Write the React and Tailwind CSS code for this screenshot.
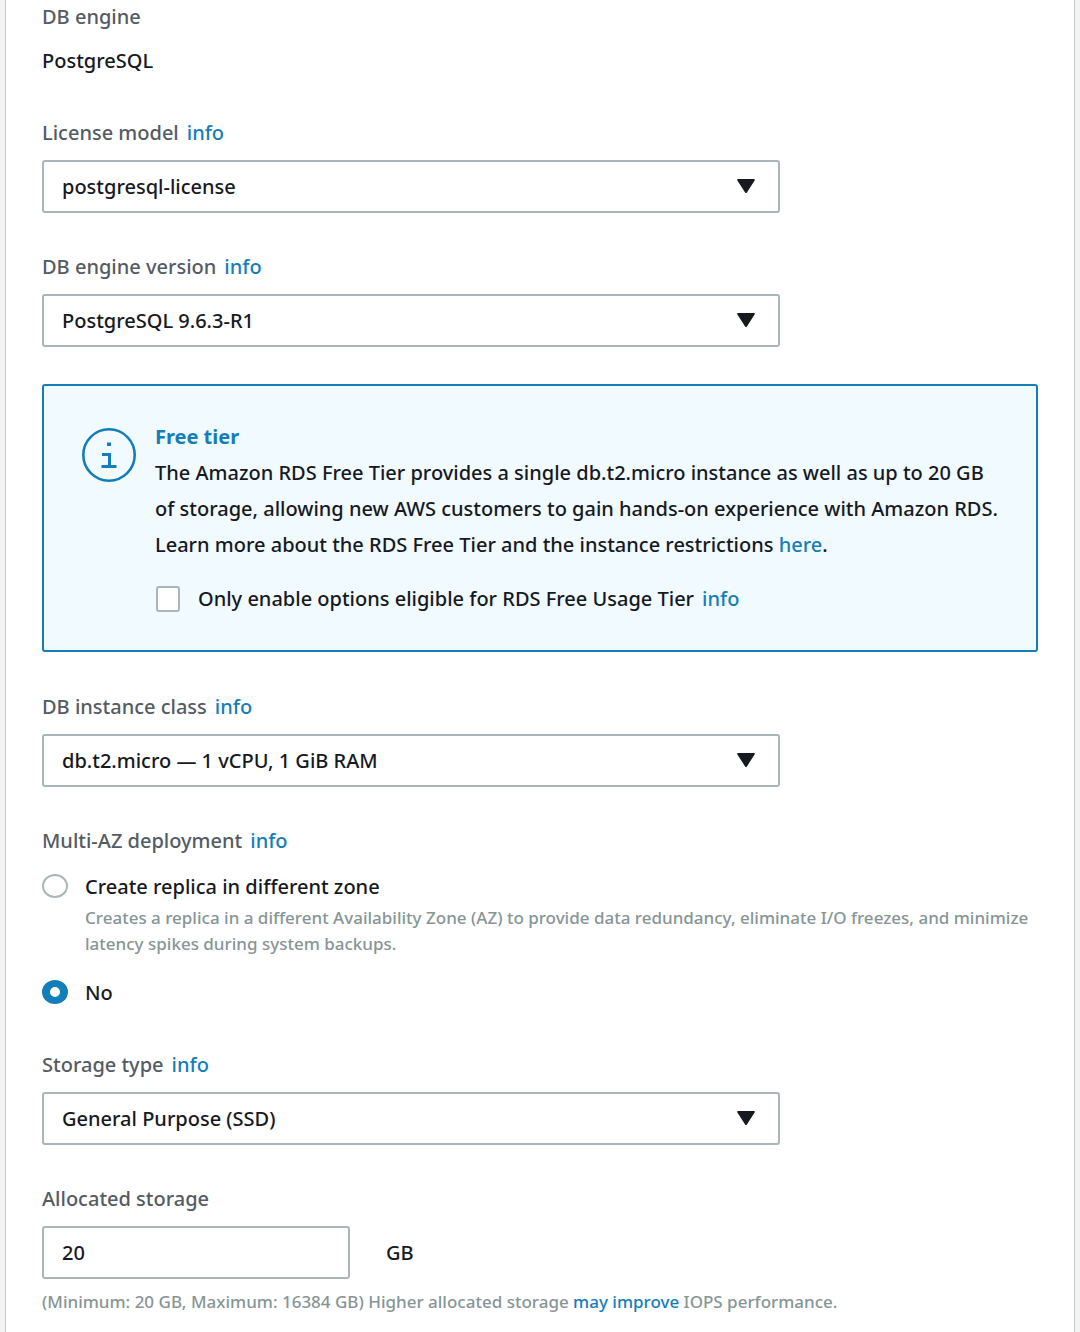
import React from "react";

const linkClass = "text-[#147eba] hover:underline";

function Info({ topic }) {
  return (
    <a href="#info" aria-label={"info about " + topic} className={"ml-2 " + linkClass}>
      info
    </a>
  );
}

function SelectField({ id, label, value }) {
  return (
    <div>
      <div className="mb-[13px] text-[#545b64]">
        <label htmlFor={id}>{label}</label>
        <Info topic={label} />
      </div>
      <div className="relative w-full max-w-[738px]">
        <select
          id={id}
          defaultValue={value}
          className="block h-[53px] w-full appearance-none rounded-[3px] border-2 border-[#aab7b8] bg-white pr-14 pl-[18px] text-[#16191f]"
        >
          <option>{value}</option>
        </select>
        <svg
          viewBox="0 0 18 14"
          aria-hidden="true"
          className="pointer-events-none absolute top-[19px] right-[25px] h-[14px] w-[18px] fill-[#16191f]"
        >
          <path d="M1.2 0h15.6c.9 0 1.3.9.8 1.6l-7.7 11.8c-.4.7-1.4.7-1.8 0L.4 1.6C-.1.9.3 0 1.2 0z" />
        </svg>
      </div>
    </div>
  );
}

const radioClass =
  "h-6 w-[26px] shrink-0 appearance-none rounded-[50%] border-2 border-[#aab7b8] bg-white checked:border-x-8 checked:border-y-[7px] checked:border-[#147eba]";

export default function App() {
  return (
    <div className="min-h-screen bg-[#f2f3f3] px-[5px] font-['Noto_Sans','Open_Sans',sans-serif] text-[20px] leading-7 font-medium text-[#16191f]">
      <main className="min-h-screen border-x border-[#c4c9c9] bg-white px-9 pt-[3px] pb-4">
        <dl className="mb-11">
          <dt className="mb-4 text-[#545b64]">DB engine</dt>
          <dd>PostgreSQL</dd>
        </dl>

        <div className="flex flex-col gap-10">
          <SelectField id="license" label="License model" value="postgresql-license" />
          <SelectField id="version" label="DB engine version" value="PostgreSQL 9.6.3-R1" />
        </div>

        <section className="mt-[37px] mb-[41px] flex gap-[19px] rounded-[3px] border-2 border-[#147eba] bg-[#f1faff] pt-[33px] pr-8 pb-[33px] pl-[38px]">
          <svg
            viewBox="0 0 54 54"
            aria-hidden="true"
            className="mt-[9px] h-[54px] w-[54px] shrink-0"
          >
            <circle cx="27" cy="27" r="25.7" fill="none" stroke="#147eba" strokeWidth="2.6" />
            <path d="M25 14.5h4v3.500h-4zM20 25h9v12h5.500v3H19.500v-3H26v-9h-6z" fill="#147eba" />
          </svg>
          <div className="min-w-0 flex-1">
            <h2 className="leading-9 font-bold text-[#147eba]">Free tier</h2>
            <p className="leading-9">
              The Amazon RDS Free Tier provides a single db.t2.micro instance as well as up to 20 GB
              of storage, allowing new AWS customers to gain hands-on experience with Amazon RDS.
              Learn more about the RDS Free Tier and the instance restrictions{" "}
              <a href="#here" className={"inline-block " + linkClass}>here</a>.
            </p>
            <div className="mt-[18px] flex items-center leading-9">
              <input
                id="free-only"
                type="checkbox"
                className="mr-[18px] ml-px h-[26px] w-6 shrink-0 appearance-none rounded-[3px] border-2 border-[#aab7b8] bg-white checked:bg-[#147eba]"
              />
              <label htmlFor="free-only">Only enable options eligible for RDS Free Usage Tier</label>
              <Info topic="free tier options" />
            </div>
          </div>
        </section>

        <SelectField id="class" label="DB instance class" value="db.t2.micro — 1 vCPU, 1 GiB RAM" />

        <fieldset className="mt-10 mb-11">
          <legend className="text-[#545b64]">
            Multi-AZ deployment
            <Info topic="Multi-AZ deployment" />
          </legend>
          <div className="mt-[18px] flex gap-[17px]">
            <input id="az-yes" type="radio" name="az" className={"mt-px " + radioClass} />
            <div>
              <label htmlFor="az-yes" className="block">Create replica in different zone</label>
              <p className="mt-1 text-[17px] leading-[26px] text-[#879596]">
                Creates a replica in a different Availability Zone (AZ) to provide data redundancy,
                eliminate I/O freezes, and minimize latency spikes during system backups.
              </p>
            </div>
          </div>
          <div className="mt-[22px] flex gap-[17px]">
            <input id="az-no" type="radio" name="az" defaultChecked className={"mt-px " + radioClass} />
            <label htmlFor="az-no">No</label>
          </div>
        </fieldset>

        <SelectField id="storage-type" label="Storage type" value="General Purpose (SSD)" />

        <div className="mt-10">
          <label htmlFor="storage" className="mb-[13px] block text-[#545b64]">
            Allocated storage
          </label>
          <div className="flex items-center gap-9">
            <input
              id="storage"
              type="text"
              inputMode="numeric"
              defaultValue="20"
              aria-describedby="storage-hint"
              className="h-[53px] w-[308px] rounded-[3px] border-2 border-[#aab7b8] bg-white px-[18px]"
            />
            <span>GB</span>
          </div>
          <p id="storage-hint" className="mt-[10px] text-[17px] leading-[26px] text-[#879596]">
            (Minimum: 20 GB, Maximum: 16384 GB) Higher allocated storage{" "}
            <a href="#iops" className={linkClass}>may improve</a> IOPS performance.
          </p>
        </div>
      </main>
    </div>
  );
}
